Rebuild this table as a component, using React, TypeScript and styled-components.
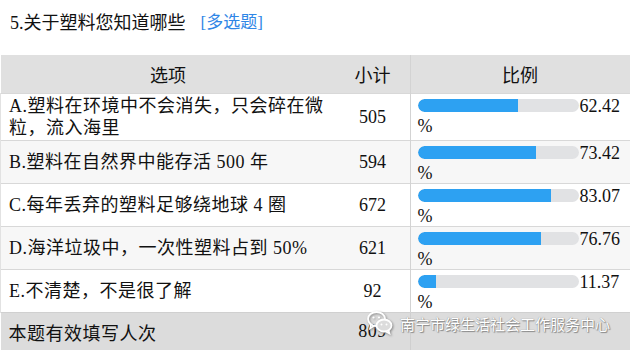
import React from 'react';
import styled, { createGlobalStyle } from 'styled-components';

const GlobalStyle = createGlobalStyle`
  html, body {
    margin: 0;
    padding: 0;
    background: #ffffff;
  }
  body {
    font-family: "Liberation Serif", "Noto Sans CJK SC", serif;
    color: #111;
  }
`;

// 题目数据 //
interface OptionRow {
    label: string;
    count: number;
    percent: number;
}

const rows: OptionRow[] = [
    { label: 'A.塑料在环境中不会消失，只会碎在微粒，流入海里', count: 505, percent: 62.42 },
    { label: 'B.塑料在自然界中能存活 500 年', count: 594, percent: 73.42 },
    { label: 'C.每年丢弃的塑料足够绕地球 4 圈', count: 672, percent: 83.07 },
    { label: 'D.海洋垃圾中，一次性塑料占到 50%', count: 621, percent: 76.76 },
    { label: 'E.不清楚，不是很了解', count: 92, percent: 11.37 },
];

const Page = styled.div`
  position: relative;
  width: 630px;
  height: 350px;
  overflow: hidden;
`;

const Title = styled.div`
  height: 55px;
  display: flex;
  align-items: center;
  gap: 15px;
  padding: 0 0 14px 10px;
  box-sizing: border-box;
  font-size: 18px;
`;

const Tag = styled.span`
  color: #2f86e6;
  font-size: 17px;
`;

const Table = styled.table`
  width: 628px;
  border-collapse: collapse;
  table-layout: fixed;
  font-size: 18px;
`;

const HeadCell = styled.th<{ $w: number; $line?: boolean }>`
  width: ${p => p.$w}px;
  height: 38px;
  padding: 0;
  background: #e0e0e0;
  font-weight: normal;
  text-align: center;
  border-right: ${p => (p.$line ? '1px solid #d3d3d3' : 'none')};
`;

const Row = styled.tr<{ $striped?: boolean }>`
  background: ${p => (p.$striped ? '#f7f7f7' : '#ffffff')};
  border-top: 1px solid #d8d8d8;
`;

const FootRow = styled.tr`
  background: #dcdcdc;
  border-top: 1px solid #d0d0d0;
`;

const LabelCell = styled.td`
  padding: 1px 6px 1px 8px;
  line-height: 22px;
  letter-spacing: 0.5px;
  vertical-align: middle;
  border-left: 1px solid #e2e2e2;
`;

const CountCell = styled.td`
  padding: 0;
  line-height: 20px;
  text-align: center;
  vertical-align: middle;
  border-right: 1px solid #d3d3d3;
`;

const RatioCell = styled.td`
  padding: 1px 8px 0 7px;
  line-height: 20px;
  vertical-align: top;
  border-right: 1px solid #d3d3d3;
`;

const FootCell = styled.td<{ $align?: string; $line?: boolean }>`
  height: 37px;
  padding: 0 8px;
  text-align: ${p => p.$align || 'left'};
  letter-spacing: 0.5px;
  border-right: ${p => (p.$line ? '1px solid #cfcfcf' : 'none')};
`;

const BarLine = styled.div`
  display: flex;
  align-items: center;
  height: 21px;
`;

const Track = styled.div`
  width: 161px;
  height: 13px;
  border-radius: 7px;
  background: #e1e2e4;
  overflow: hidden;
  flex-shrink: 0;
`;

const Fill = styled.div`
  height: 100%;
  background: #2da1f2;
  border-radius: 7px 0 0 7px;
`;

const Value = styled.span`
  margin-left: 1px;
`;

const Percent = styled.div`
  height: 20px;
`;

const Watermark = styled.div`
  position: absolute;
  left: 366px;
  top: 310px;
  display: flex;
  align-items: center;
  gap: 6px;
  font-family: "Noto Sans CJK SC", "Noto Sans", sans-serif;
  font-size: 15px;
  color: #ffffff;
  text-shadow: 0 0 1px #777, 1px 1px 1px #888;
`;

function WeChatIcon() {
    return (
        <svg width="28" height="26" viewBox="0 0 28 26" style={{ filter: 'drop-shadow(1px 1px 1px #888)' }}>
            <ellipse cx="10.5" cy="9" rx="8.5" ry="7" fill="none" stroke="#ffffff" strokeWidth="1.8" />
            <path d="M5 14.5 L4 18.5 L8.5 15.6" fill="none" stroke="#ffffff" strokeWidth="1.6" />
            <ellipse cx="18" cy="15.5" rx="7.5" ry="6" fill="#dcdcdc" stroke="#ffffff" strokeWidth="1.8" />
            <path d="M22.5 20 L23.5 23.5 L19.5 21.3" fill="none" stroke="#ffffff" strokeWidth="1.6" />
            <circle cx="7.5" cy="7.5" r="1.1" fill="#ffffff" />
            <circle cx="13" cy="7.5" r="1.1" fill="#ffffff" />
            <circle cx="15.5" cy="14.5" r="1" fill="#ffffff" />
            <circle cx="20.5" cy="14.5" r="1" fill="#ffffff" />
        </svg>
    );
}

export default function App() {
    return (
        <Page>
            <GlobalStyle />
            <Title>
                <span>5.关于塑料您知道哪些</span>
                <Tag>[多选题]</Tag>
            </Title>
            <Table>
                <thead>
                    <tr>
                        <HeadCell $w={335}>选项</HeadCell>
                        <HeadCell $w={74} $line>小计</HeadCell>
                        <HeadCell $w={219} $line>比例</HeadCell>
                    </tr>
                </thead>
                <tbody>
                    {rows.map((r, i) => (
                        <Row key={r.label} $striped={i % 2 === 1}>
                            <LabelCell>{r.label}</LabelCell>
                            <CountCell>{r.count}</CountCell>
                            <RatioCell>
                                <BarLine>
                                    <Track>
                                        <Fill style={{ width: `${r.percent}%` }} />
                                    </Track>
                                    <Value>{r.percent.toFixed(2)}</Value>
                                </BarLine>
                                <Percent>%</Percent>
                            </RatioCell>
                        </Row>
                    ))}
                    <FootRow>
                        <FootCell>本题有效填写人次</FootCell>
                        <FootCell $align="center" $line>809</FootCell>
                        <FootCell $line></FootCell>
                    </FootRow>
                </tbody>
            </Table>
            <Watermark>
                <WeChatIcon />
                <span>南宁市绿生活社会工作服务中心</span>
            </Watermark>
        </Page>
    );
}
